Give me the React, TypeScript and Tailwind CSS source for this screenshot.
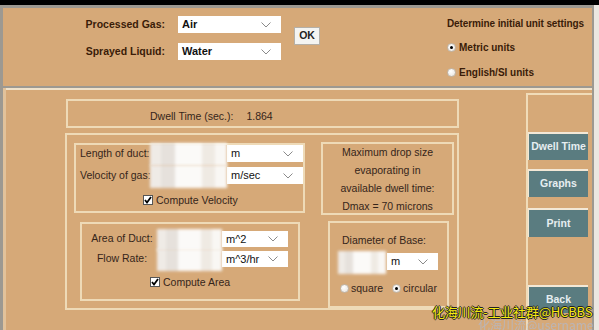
import React from "react";

const Chevron = () => (
  <svg width="10" height="6" viewBox="0 0 10 6" className="shrink-0">
    <polyline points="0.5,0.5 5,5 9.5,0.5" fill="none" stroke="#8a8a8a" strokeWidth="1" />
  </svg>
);

function Select({ label, w, h = 17, bold = false }: { label: string; w: string; h?: number; bold?: boolean }) {
  return (
    <div
      className={`${w} bg-white flex items-center justify-between pl-[4px] pr-[10px] text-[#111] ${bold ? "font-bold text-[11px]" : "text-[11px]"}`}
      style={{ height: h }}
    >
      <span className="leading-none">{label}</span>
      <Chevron />
    </div>
  );
}

function Blur({ w, h = 17 }: { w: string; h?: number }) {
  return (
    <div className={`${w} relative`} style={{ height: h }}>
      <div className="absolute left-0 right-0 top-[-2px] bottom-[-4px] flex blur-[1.5px] bg-[#f6f3ef]">
        <div className="w-[14%] bg-[#efebe6]" />
        <div className="w-[18%] bg-[#e6e1dc]" />
        <div className="w-[36%] bg-[#fbfaf8]" />
        <div className="w-[16%] bg-[#efeae3]" />
        <div className="w-[16%] bg-[#f9f7f4]" />
      </div>
    </div>
  );
}

const Check = () => (
  <div className="w-[10px] h-[10px] bg-white border border-[#555] flex items-center justify-center">
    <svg width="8" height="8" viewBox="0 0 8 8">
      <polyline points="1,4 3,6.5 7,1" fill="none" stroke="#000" strokeWidth="1.8" />
    </svg>
  </div>
);

const Radio = ({ on }: { on?: boolean }) => (
  <div className="w-[9px] h-[9px] rounded-full bg-[radial-gradient(circle_at_40%_35%,#ffffff,#e6e2dc)] border border-[#bfb6aa] flex items-center justify-center">
    {on && <div className="w-[3px] h-[3px] rounded-full bg-black" />}
  </div>
);

const Btn = ({ label, cls }: { label: string; cls: string }) => (
  <div
    className={`w-[60px] h-[28px] bg-[#5a7c80] border-t-[2px] border-l-[1px] border-[#f3e8d6] flex items-center justify-center text-[10.5px] font-bold text-[#e6eef0] ${cls}`}
  >
    {label}
  </div>
);

export default function App() {
  return (
    <div className="w-[599px] h-[330px] bg-[#ebe7e1] overflow-hidden relative font-['Liberation_Sans',Arial,sans-serif] text-[#35251a]">
      <div className="h-[5px] bg-black" />
      {/* top panel */}
      <div className="w-[594px] h-[83px] bg-[#d6a978] border-l-[3px] border-t-[3px] border-r-[2px] border-b-[2px] border-[#9d9991] flex">
        <div className="grid grid-cols-[162px_103px] gap-x-[13px] gap-y-[10px] pt-[8px] self-start">
          <div className="text-right leading-[17px] text-[10.5px] font-bold text-[#3a1c08]">Processed Gas:</div>
          <Select label="Air" w="w-[103px]" bold />
          <div className="text-right leading-[17px] text-[10.5px] font-bold text-[#3a1c08]">Sprayed Liquid:</div>
          <Select label="Water" w="w-[103px]" bold />
        </div>
        <div className="ml-[13px] mt-[19px] w-[26px] h-[18px] bg-[#f4f4f2] border border-[#b5b0a8] flex items-center justify-center text-[10.5px] font-bold text-[#222]">
          OK
        </div>
        <div className="ml-[127px] flex flex-col text-[10px] font-bold text-[#3a1c08]">
          <div className="mt-[9px] leading-[13px] tracking-[-0.1px]">Determine initial unit settings</div>
          <div className="mt-[11px] leading-[13px] flex items-center gap-[3px]">
            <Radio on />
            <span>Metric units</span>
          </div>
          <div className="mt-[12px] leading-[13px] flex items-center gap-[3px]">
            <Radio />
            <span>English/SI units</span>
          </div>
        </div>
      </div>

      {/* bottom panel */}
      <div className="w-[594px] h-[242px] bg-[#d6a978] border-l-[3px] border-r-[2px] border-[#9d9991] flex">
        <div className="w-[3px] bg-[#e9d3b0] shrink-0 h-full opacity-60" />
        <div className="flex-1 flex">
          {/* left area */}
          <div className="w-[520px] border-t-[2px] border-[#f0e2ca] flex flex-col">
            <div className="ml-[60px] mt-[9px] w-[393px] h-[29px] border-[2px] border-[#eedab7] pt-[9px] pl-[82px] text-[10.5px] leading-[13px] flex">
              <span>Dwell Time (sec.):</span>
              <span className="ml-[13px]">1.864</span>
            </div>
            <div className="ml-[59px] mt-[5px] w-[394px] h-[177px] border-[2px] border-[#eedab7] flex flex-col">
              {/* row1 */}
              <div className="flex items-start mt-[8px]">
                <div className="ml-[7px] w-[231px] h-[70px] border-[2px] border-[#eedab7] flex flex-col text-[10.5px]">
                  <div className="flex items-center h-[17px]">
                    <div className="w-[74px] pl-[4px] whitespace-nowrap">Length of duct:</div>
                    <Blur w="w-[77px]" />
                    <Select label="m" w="w-[76px]" />
                  </div>
                  <div className="flex items-center h-[17px] mt-[5px]">
                    <div className="w-[74px] pl-[4px] whitespace-nowrap">Velocity of gas:</div>
                    <Blur w="w-[77px]" />
                    <Select label="m/sec" w="w-[76px]" />
                  </div>
                  <div className="flex items-center mt-[11px] ml-[67px] gap-[3px] leading-[10px]">
                    <Check />
                    <span>Compute Velocity</span>
                  </div>
                </div>
                <div className="ml-[16px] -mt-[1px] w-[133px] h-[73px] border-[2px] border-[#eedab7] text-[10.5px] leading-[18px] text-center">
                  <div className="-mt-[1px]">Maximum drop size</div>
                  <div>evaporating in</div>
                  <div>available dwell time:</div>
                  <div>Dmax = 70 microns</div>
                </div>
              </div>
              {/* row2 */}
              <div className="flex items-start mt-[6px]">
                <div className="ml-[13px] mt-[1px] w-[220px] h-[79px] border-[2px] border-[#eedab7] flex flex-col text-[10.5px]">
                  <div className="flex items-center h-[16px] mt-[7px]">
                    <div className="ml-[5px] w-[70px] text-center whitespace-nowrap">Area of Duct:</div>
                    <Blur w="w-[65px]" h={16} />
                    <Select label="m^2" w="w-[66px]" h={16} />
                  </div>
                  <div className="flex items-center h-[16px] mt-[4px]">
                    <div className="ml-[5px] w-[70px] text-center whitespace-nowrap">Flow Rate:</div>
                    <Blur w="w-[65px]" h={16} />
                    <Select label="m^3/hr" w="w-[66px]" h={16} />
                  </div>
                  <div className="flex items-center mt-[10px] ml-[68px] gap-[3px] leading-[10px]">
                    <Check />
                    <span>Compute Area</span>
                  </div>
                </div>
                <div className="ml-[28px] w-[121px] h-[87px] border-[2px] border-[#eedab7] flex flex-col text-[10.5px]">
                  <div className="mt-[11px] ml-[12px] leading-[13px]">Diameter of Base:</div>
                  <div className="flex mt-[6px] ml-[8px] gap-[1px]">
                    <Blur w="w-[48px]" />
                    <Select label="m" w="w-[51px]" />
                  </div>
                  <div className="flex items-center mt-[12px] ml-[10px] leading-[13px]">
                    <Radio />
                    <span className="ml-[2px]">square</span>
                    <div className="ml-[9px]">
                      <Radio on />
                    </div>
                    <span className="ml-[2px]">circular</span>
                  </div>
                </div>
              </div>
            </div>
          </div>
          {/* right column */}
          <div className="flex-1 border-t-[2px] border-[#f0e2ca]">
            <div className="mt-[3px] h-full border-l-[2px] border-t-[2px] border-[#f0dcb9] flex flex-col">
              <Btn label="Dwell Time" cls="mt-[37px]" />
              <Btn label="Graphs" cls="mt-[9px]" />
              <Btn label="Print" cls="mt-[11px] h-[29px]" />
              <Btn label="Back" cls="mt-[48px]" />
            </div>
          </div>
        </div>
      </div>

      {/* watermark overlay */}
      <div className="absolute left-[478px] top-[318px] text-[12px] leading-[14px] text-[#a9bde0] opacity-60 font-['Noto_Sans_CJK_SC',sans-serif] whitespace-nowrap">
        化海川流@username
      </div>
      <div className="absolute left-[432px] top-[303px] text-[13px] leading-[18px] tracking-[-0.2px] text-[#f5ea10] font-['Noto_Sans_CJK_SC',sans-serif] whitespace-nowrap [text-shadow:1px_0_0_#222,-1px_0_0_#222,0_1px_0_#222,0_-1px_0_#222]">
        化海川流-工业社群@HCBBS
      </div>
    </div>
  );
}
